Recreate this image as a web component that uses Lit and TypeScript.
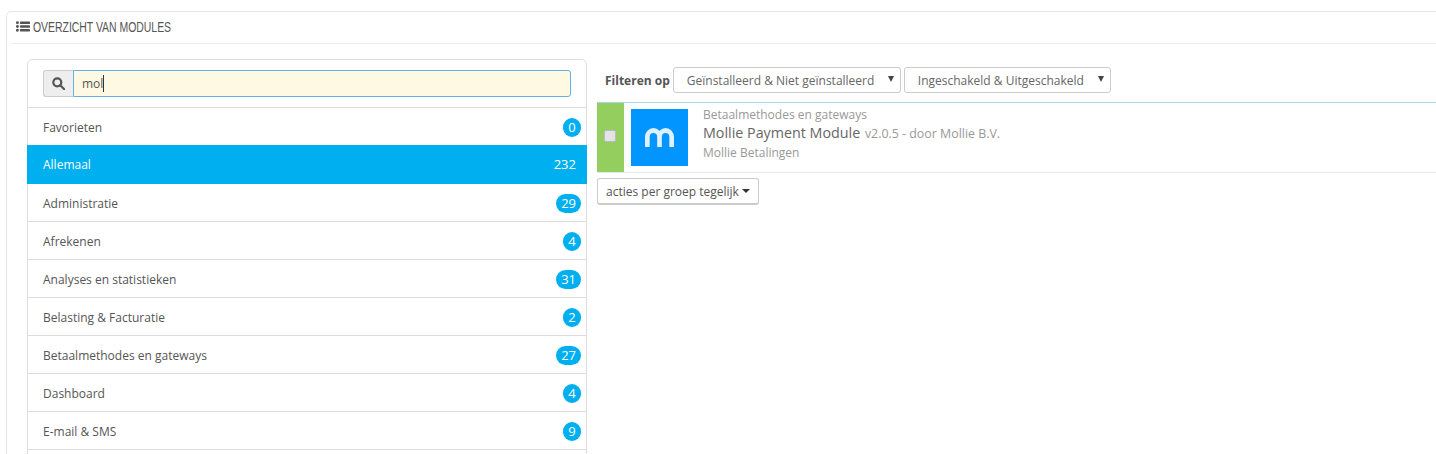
import { css, html, LitElement } from 'lit';
import { customElement } from 'lit/decorators.js';

const categories = [
    { name: 'Favorieten', count: 0 },
    { name: 'Allemaal', count: 232, active: true },
    { name: 'Administratie', count: 29 },
    { name: 'Afrekenen', count: 4 },
    { name: 'Analyses en statistieken', count: 31 },
    { name: 'Belasting & Facturatie', count: 2 },
    { name: 'Betaalmethodes en gateways', count: 27 },
    { name: 'Dashboard', count: 4 },
    { name: 'E-mail & SMS', count: 9 },
];

@customElement('app-root')
export class AppRoot extends LitElement {
    static styles = css`
        :host {
            display: block;
            height: 454px;
            overflow: hidden;
            background: #fff;
            color: #555;
            font-family: 'Open Sans', 'Liberation Sans', sans-serif;
            font-size: 12px;
            padding: 11px 0 0 6px;
            box-sizing: border-box;
        }
        .panel {
            width: 1460px;
            height: 600px;
            box-sizing: border-box;
            border: 1px solid #e6e6e6;
            border-radius: 5px;
            padding: 0 4px;
        }
        .heading {
            display: flex;
            align-items: center;
            gap: 3px;
            height: 32px;
            box-sizing: border-box;
            padding: 0 0 2px 5px;
            border-bottom: 1px solid #eee;
            font-family: 'Liberation Sans', sans-serif;
            font-size: 15px;
            color: #555;
        }
        .heading span {
            transform: scaleX(0.695);
            transform-origin: left center;
            white-space: nowrap;
        }
        .content {
            display: flex;
            align-items: flex-start;
            padding: 15px 0 0 16px;
        }
        .sidebar {
            width: 560px;
            min-height: 500px;
            flex: none;
            box-sizing: border-box;
            border: 1px solid #ddd;
            border-radius: 5px 5px 0 0;
        }
        .search {
            display: flex;
            height: 48px;
            box-sizing: border-box;
            padding: 10px 15px;
            border-bottom: 1px solid #ddd;
        }
        .addon {
            width: 30px;
            height: 27px;
            flex: none;
            box-sizing: border-box;
            display: flex;
            align-items: center;
            justify-content: center;
            background: #eee;
            border: 1px solid #ccc;
            border-right: 0;
            border-radius: 3px 0 0 3px;
        }
        .input {
            flex: 1;
            height: 27px;
            box-sizing: border-box;
            display: flex;
            align-items: center;
            padding-left: 8px;
            background: #fef9e2;
            border: 1px solid #66afe9;
            border-radius: 0 3px 3px 0;
            color: #555;
        }
        .caret {
            width: 1px;
            height: 17px;
            background: #333;
        }
        .row {
            display: flex;
            align-items: center;
            justify-content: space-between;
            height: 38px;
            box-sizing: border-box;
            padding: 1px 5px 0 15px;
            border-bottom: 1px solid #ddd;
            color: #555;
        }
        .search + .row {
            height: 37px;
            border-bottom: 0;
        }
        .row.active {
            height: 39px;
            background: #00aff0;
            color: #fff;
            margin: 0 -1px;
            padding: 0 11px 0 16px;
            border-bottom: 0;
        }
        .badge {
            min-width: 18px;
            height: 19px;
            box-sizing: border-box;
            padding: 0 5px;
            border-radius: 10px;
            background: #00aff0;
            color: #fff;
            font-size: 13px;
            line-height: 19px;
            text-align: center;
        }
        .row.active .badge {
            padding: 0;
            background: none;
        }
        .main {
            flex: 1;
            padding: 8px 0 0 10px;
            min-width: 0;
        }
        .filters {
            display: flex;
            align-items: center;
            height: 26px;
            padding-left: 8px;
        }
        .filters b {
            font-weight: 700;
            margin-right: 3px;
            color: #555;
        }
        .select {
            position: relative;
            height: 26px;
            box-sizing: border-box;
            display: flex;
            align-items: center;
            border: 1px solid #ccc;
            border-radius: 3px;
            background: #fff;
            padding-left: 13px;
            margin-right: 3px;
            color: #666;
        }
        .select.status {
            width: 228px;
        }
        .select.enabled {
            width: 207px;
        }
        .select::after {
            content: '';
            position: absolute;
            right: 6px;
            top: 8px;
            border: 3.5px solid transparent;
            border-top: 6px solid #444;
            border-bottom: 0;
        }
        .module {
            display: flex;
            margin-top: 9px;
            height: 71px;
            box-sizing: border-box;
            border-top: 1px solid #a0d8ea;
            border-bottom: 1px solid #e6e9ee;
        }
        .check {
            width: 27px;
            flex: none;
            display: flex;
            align-items: center;
            justify-content: center;
            background: #93ce5f;
        }
        .box {
            width: 10px;
            height: 10px;
            margin: 0 1px 4px 0;
            background: #e4e4e4;
            border: 1px solid #bbb;
            border-radius: 2px;
        }
        .logo {
            width: 57px;
            height: 57px;
            flex: none;
            margin: 6px 15px 0 7px;
            background: #0095ff;
            display: flex;
            align-items: center;
            justify-content: center;
        }
        .info {
            display: flex;
            flex-direction: column;
            padding-top: 3px;
            color: #999;
        }
        .info div {
            line-height: 18px;
        }
        .info .title {
            font-size: 14.3px;
            color: #666;
            margin-bottom: 1px;
        }
        .version {
            font-size: 12.4px;
            color: #999;
            margin-left: 1px;
        }
        .bulk {
            display: inline-flex;
            align-items: center;
            gap: 3px;
            height: 27px;
            box-sizing: border-box;
            margin-top: 5px;
            padding: 0 8px;
            background: #fff;
            border: 1px solid #ccc;
            border-bottom-width: 2px;
            border-radius: 3px;
            color: #555;
            font-family: inherit;
            font-size: 12px;
        }
        .bulk::after {
            content: '';
            border: 4px solid transparent;
            border-top: 4px solid #333;
            border-bottom: 0;
        }
    `;

    render() {
        return html`
            <div class="panel">
                <div class="heading">
                    <svg width="14" height="11" viewBox="0 0 16 13" preserveAspectRatio="none" fill="#555">
                        <circle cx="1.6" cy="2" r="1.7"></circle>
                        <circle cx="1.6" cy="6.5" r="1.7"></circle>
                        <circle cx="1.6" cy="11" r="1.7"></circle>
                        <rect x="4.5" y="0.6" width="11.5" height="2.8" rx="0.5"></rect>
                        <rect x="4.5" y="5.1" width="11.5" height="2.8" rx="0.5"></rect>
                        <rect x="4.5" y="9.6" width="11.5" height="2.8" rx="0.5"></rect>
                    </svg>
                    <span>OVERZICHT VAN MODULES</span>
                </div>
                <div class="content">
                    <div class="sidebar">
                        <div class="search">
                            <span class="addon">
                                <svg width="13" height="13" viewBox="0 0 13 13" fill="none" stroke="#555" stroke-width="2.2">
                                    <circle cx="5.3" cy="5.3" r="4"></circle>
                                    <path d="M8.3 8.3l3.9 3.9" stroke-linecap="round"></path>
                                </svg>
                            </span>
                            <span class="input">mol<span class="caret"></span></span>
                        </div>
                        ${categories.map(
                            c => html`
                                <div class="row ${c.active ? 'active' : ''}">
                                    <span>${c.name}</span>
                                    <span class="badge">${c.count}</span>
                                </div>
                            `,
                        )}
                    </div>
                    <div class="main">
                        <div class="filters">
                            <b>Filteren op</b>
                            <span class="select status">Geïnstalleerd &amp; Niet geïnstalleerd</span>
                            <span class="select enabled">Ingeschakeld &amp; Uitgeschakeld</span>
                        </div>
                        <div class="module">
                            <div class="check"><span class="box"></span></div>
                            <div class="logo">
                                <svg width="29" height="19" viewBox="0 0 31 19" preserveAspectRatio="none" fill="none" stroke="#dff1ff" stroke-width="5">
                                    <path d="M2.5 19V9a6.5 6.5 0 0 1 13 0v10M15.5 9a6.5 6.5 0 0 1 13 0v10"></path>
                                </svg>
                            </div>
                            <div class="info">
                                <div>Betaalmethodes en gateways</div>
                                <div class="title">Mollie Payment Module <span class="version">v2.0.5 - door Mollie B.V.</span></div>
                                <div>Mollie Betalingen</div>
                            </div>
                        </div>
                        <button class="bulk">acties per groep tegelijk</button>
                    </div>
                </div>
            </div>
        `;
    }
}

declare global {
    interface HTMLElementTagNameMap {
        'app-root': AppRoot;
    }
}
